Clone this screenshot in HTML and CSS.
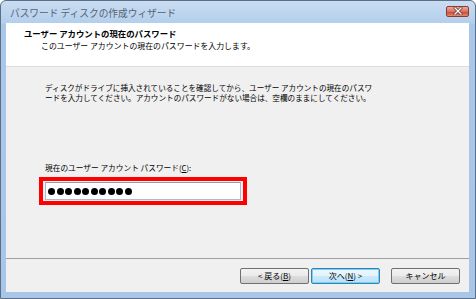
FILE: index.html
```html
<!DOCTYPE html>
<html lang="ja">
<head>
  <meta charset="UTF-8" />
  <title>パスワード ディスクの作成ウィザード</title>
  <link rel="stylesheet" href="styles.css">
</head>
<body>
  <div class="window">
    <!-- title bar -->
    <div class="titlebar">
      <span class="title">パスワード ディスクの作成ウィザード</span>
      <span class="close-btn">
        <svg width="12" height="8" viewBox="0 0 12 8">
          <path d="M3 1 L9 7 M9 1 L3 7" stroke="#5a2020" stroke-width="2.6" stroke-linecap="square"/>
          <path d="M3 1 L9 7 M9 1 L3 7" stroke="#fff" stroke-width="1.4" stroke-linecap="square"/>
        </svg>
      </span>
    </div>

    <div class="client">
      <div class="header">
        <div class="header-title">ユーザー アカウントの現在のパスワード</div>
        <div class="header-sub">このユーザー アカウントの現在のパスワードを入力します。</div>
      </div>

      <div class="content">
        <p class="desc">ディスクがドライブに挿入されていることを確認してから、ユーザー アカウントの現在のパスワ<br>ードを入力してください。アカウントのパスワードがない場合は、空欄のままにしてください。</p>

        <label class="field-label">現在のユーザー アカウント パスワード(<u>C</u>):</label>
        <div class="highlight">
          <div class="password-box" id="pw"></div>
        </div>
      </div>

      <div class="footer">
        <div class="nav-buttons">
          <button class="btn">&lt; 戻る(<u>B</u>)</button>
          <button class="btn btn-default">次へ(<u>N</u>) &gt;</button>
        </div>
        <button class="btn">キャンセル</button>
      </div>
    </div>
  </div>

  <script>
    const pw = document.getElementById('pw');
    for (let i = 0; i < 10; i++) {
      const dot = document.createElement('span');
      dot.className = 'dot';
      pw.appendChild(dot);
    }
  </script>
</body>
</html>
```

FILE: styles.css
```css
* {
  box-sizing: border-box;
}

body {
  margin: 0;
  background: #ffffff;
  font-family: "Noto Sans CJK JP", "Noto Sans", sans-serif;
  color: #000;
}

.window {
  width: 476px;
  height: 299px;
  display: flex;
  flex-direction: column;
  background: linear-gradient(to bottom, #c9ddf2 0px, #b4cfec 22px, #a9c8e9 23px, #a7c6e8 100%);
  border: 1px solid #5d6f86;
  border-radius: 6px 6px 0 0;
}

.titlebar {
  height: 22px;
  display: flex;
  align-items: center;
  justify-content: space-between;
  padding: 0 6px 0 9px;
}

.title {
  font-size: 9.7px;
  color: #56636f;
  line-height: 12px;
  margin-top: 1px;
}

.close-btn {
  width: 23px;
  height: 11px;
  margin-top: -2px;
  display: flex;
  align-items: center;
  justify-content: center;
  border: 1px solid #8a3b32;
  border-radius: 2px;
  background: linear-gradient(to bottom, #eeaaa0 0%, #d9705f 50%, #c7412d 51%, #e18a75 100%);
}

.client {
  height: 269px;
  margin: 0 6px 0 5px;
  display: flex;
  flex-direction: column;
  background: #f0f0f0;
}

.header {
  height: 44px;
  background: #ffffff;
  border-bottom: 1px solid #dcdcdc;
  padding: 5px 0 0 18px;
}

.header-title {
  font-size: 8.4px;
  font-weight: bold;
  line-height: 11px;
}

.header-sub {
  font-size: 7.9px;
  line-height: 10px;
  margin-top: 2px;
  padding-left: 17px;
}

.content {
  flex: 1;
  padding: 16px 0 0 39px;
  display: flex;
  flex-direction: column;
  align-items: flex-start;
}

.desc {
  margin: 0;
  font-size: 7.6px;
  line-height: 10px;
}

.field-label {
  margin-top: 60px;
  font-size: 7.7px;
  line-height: 10px;
}

.highlight {
  margin: 4px 0 0 -6px;
  width: 208px;
  height: 28px;
  border: 4px solid #ff0000;
  padding: 1px 2px;
}

.password-box {
  height: 18px;
  background: #ffffff;
  border: 1px solid #a7bbd3;
  border-top-color: #8d9fb6;
  display: flex;
  align-items: center;
  gap: 1.5px;
  padding-left: 2px;
}

.dot {
  width: 7px;
  height: 7px;
  border-radius: 50%;
  background: #000;
}

.footer {
  height: 34px;
  border-top: 1px solid #a0a0a0;
  display: flex;
  justify-content: flex-end;
  align-items: flex-start;
  gap: 11px;
  padding: 9px 9px 0 0;
}

.nav-buttons {
  display: flex;
  gap: 2px;
}

.btn {
  width: 69px;
  height: 16px;
  padding: 0;
  font-family: "Noto Sans CJK JP", "Noto Sans", sans-serif;
  font-size: 8px;
  line-height: 14px;
  color: #000;
  border: 1px solid #707070;
  border-radius: 2px;
  background: linear-gradient(to bottom, #f2f2f2 0%, #ebebeb 50%, #dddddd 51%, #cfcfcf 100%);
  cursor: pointer;
}

.btn-default {
  border-color: #3c7fb1;
  background: linear-gradient(to bottom, #eef8fd 0%, #e0f3fc 50%, #cbebfd 51%, #b8e1f7 100%);
  box-shadow: inset 0 0 0 1px #6fd4f7;
}

u {
  text-decoration: underline;
}
```
